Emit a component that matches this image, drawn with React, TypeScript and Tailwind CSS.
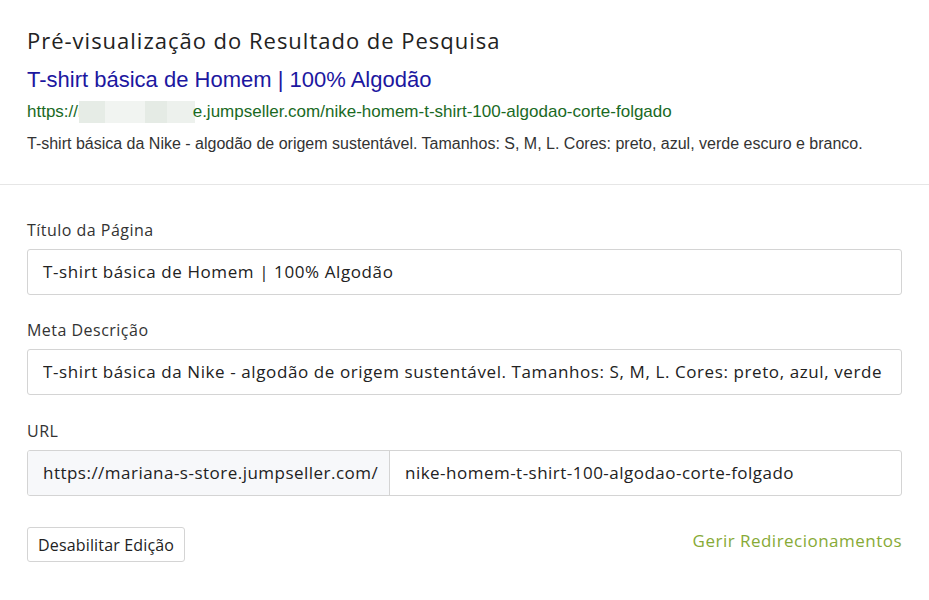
import React from "react";

export default function App() {
  const ff = { fontFamily: "'Open Sans', Lato, sans-serif" };
  const arial = { fontFamily: "'Liberation Sans', Arial, sans-serif" };
  return (
    <div className="w-[929px] h-[600px] bg-white text-[#333] tracking-[0.03em]" style={ff}>
      <div className="px-[27px] pt-[25px] pb-[30px] border-b border-[#e6e6e6]">
        <h1 className="text-[22px] leading-[30px] text-[#222] tracking-[0.045em]">Pré-visualização do Resultado de Pesquisa</h1>
        <div style={arial} className="mt-[12px] tracking-normal">
          <div className="text-[22px] leading-[26px] text-[#1c17a0]">T-shirt básica de Homem | 100% Algodão</div>
          <div className="mt-[8px] text-[17px] leading-[20px] text-[#1a6a1f] flex items-center">
            <span>https://r</span>
            <span className="inline-flex h-[22px] w-[116px] -ml-[5px] bg-[#eef2ee]">
              <span className="w-[26px] bg-[#e6ece6]" />
              <span className="w-[40px] bg-[#f1f4f1]" />
              <span className="w-[22px] bg-[#e5ebe5]" />
              <span className="w-[28px] bg-[#edf1ed]" />
            </span>
            <span className="-ml-[2px]">e.jumpseller.com/nike-homem-t-shirt-100-algodao-corte-folgado</span>
          </div>
          <div className="mt-[11px] text-[16px] leading-[20px] text-[#333]">
            T-shirt básica da Nike - algodão de origem sustentável. Tamanhos: S, M, L. Cores: preto, azul, verde escuro e branco.
          </div>
        </div>
      </div>
      <div className="px-[27px] pt-[34px]">
        <label className="block text-[16px] leading-[22px]">Título da Página</label>
        <div className="mt-[8px] h-[46px] border border-[#d4d4d4] rounded-[3px] px-[15px] flex items-center text-[17px] text-[#222] overflow-hidden whitespace-nowrap tracking-[0.035em]">
          T-shirt básica de Homem | 100% Algodão
        </div>
        <label className="block mt-[24px] text-[16px] leading-[22px]">Meta Descrição</label>
        <div className="mt-[8px] h-[46px] border border-[#d4d4d4] rounded-[3px] pl-[15px] flex items-center text-[17px] text-[#222] overflow-hidden tracking-[0.035em]">
          <div className="w-full overflow-hidden whitespace-nowrap pr-[14px]">
            <span className="block overflow-hidden">T-shirt básica da Nike - algodão de origem sustentável. Tamanhos: S, M, L. Cores: preto, azul, verde escuro e branco.</span>
          </div>
        </div>
        <label className="block mt-[25px] text-[16px] leading-[22px]">URL</label>
        <div className="mt-[8px] h-[46px] border border-[#d4d4d4] rounded-[3px] flex text-[17px] text-[#222] overflow-hidden">
          <div className="w-[362px] shrink-0 bg-[#f7f8fa] border-r border-[#d4d4d4] px-[15px] flex items-center whitespace-nowrap">
            https://mariana-s-store.jumpseller.com/
          </div>
          <div className="flex-1 px-[15px] flex items-center whitespace-nowrap">nike-homem-t-shirt-100-algodao-corte-folgado</div>
        </div>
        <div className="mt-[31px] flex items-start justify-between">
          <button className="h-[35px] px-[10px] border border-[#d4d4d4] rounded-[3px] bg-white text-[16px] text-[#222] tracking-[0.01em]">
            Desabilitar Edição
          </button>
          <a className="mt-[1px] text-[17px] text-[#87aa36]">Gerir Redirecionamentos</a>
        </div>
      </div>
    </div>
  );
}
